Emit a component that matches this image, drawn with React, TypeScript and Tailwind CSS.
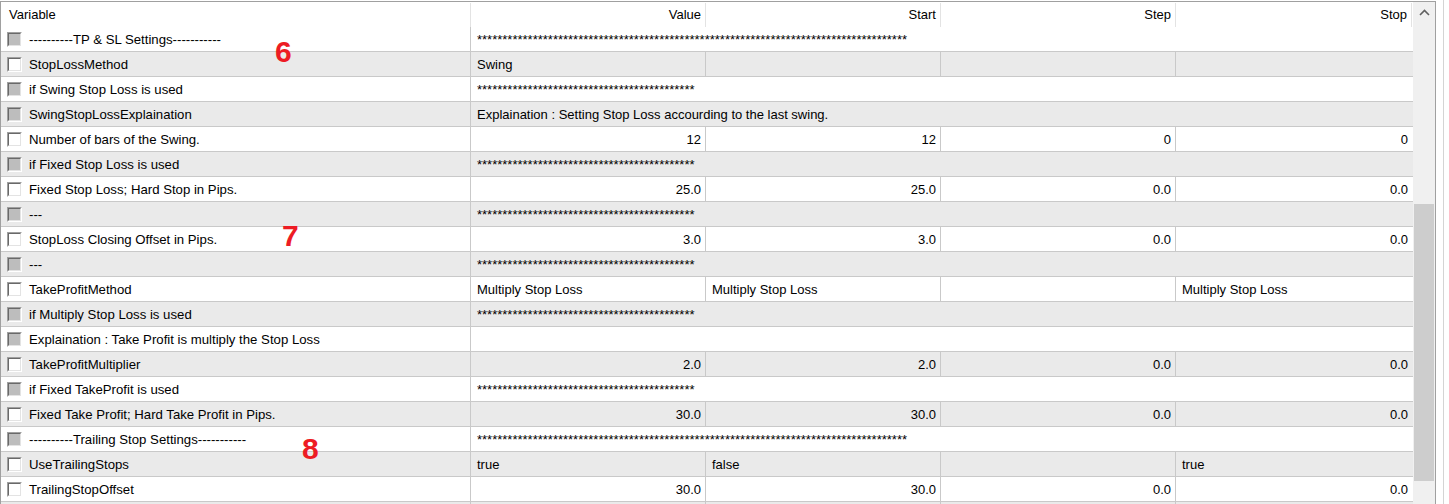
import React from "react";

type Row = {
  name: string;
  disabled: boolean;
  comment?: string;
  values?: string[];
  left?: boolean;
};

const A85 = "*".repeat(85);
const A42 = "*".repeat(43);

const ROWS: Row[] = [
  { name: "----------TP & SL Settings-----------", disabled: true, comment: A85 },
  { name: "StopLossMethod", disabled: false, values: ["Swing", "", "", ""], left: true },
  { name: "if Swing Stop Loss is used", disabled: true, comment: A42 },
  { name: "SwingStopLossExplaination", disabled: true, comment: "Explaination : Setting Stop Loss accourding to the last swing." },
  { name: "Number of bars of the Swing.", disabled: false, values: ["12", "12", "0", "0"] },
  { name: "if Fixed Stop Loss is used", disabled: true, comment: A42 },
  { name: "Fixed Stop Loss; Hard Stop in Pips.", disabled: false, values: ["25.0", "25.0", "0.0", "0.0"] },
  { name: "---", disabled: true, comment: A42 },
  { name: "StopLoss Closing Offset in Pips.", disabled: false, values: ["3.0", "3.0", "0.0", "0.0"] },
  { name: "---", disabled: true, comment: A42 },
  { name: "TakeProfitMethod", disabled: false, values: ["Multiply Stop Loss", "Multiply Stop Loss", "", "Multiply Stop Loss"], left: true },
  { name: "if Multiply Stop Loss is used", disabled: true, comment: A42 },
  { name: "Explaination : Take Profit is multiply the Stop Loss", disabled: true, comment: "" },
  { name: "TakeProfitMultiplier", disabled: false, values: ["2.0", "2.0", "0.0", "0.0"] },
  { name: "if Fixed TakeProfit is used", disabled: true, comment: A42 },
  { name: "Fixed Take Profit; Hard Take Profit in Pips.", disabled: false, values: ["30.0", "30.0", "0.0", "0.0"] },
  { name: "----------Trailing Stop Settings-----------", disabled: true, comment: A85 },
  { name: "UseTrailingStops", disabled: false, values: ["true", "false", "", "true"], left: true },
  { name: "TrailingStopOffset", disabled: false, values: ["30.0", "30.0", "0.0", "0.0"] },
  { name: "", disabled: false, values: ["", "", "", ""] },
];

function Checkbox({ disabled }: { disabled: boolean }) {
  return (
    <div className="flex h-[15px] w-[15px] shrink-0 border border-t-[#a0a0a0] border-l-[#a0a0a0] border-b-white border-r-white">
      <div
        className={`flex-1 border border-t-[#696969] border-l-[#696969] border-b-[#e3e3e3] border-r-[#e3e3e3] ${
          disabled ? "bg-[#bdbdbd]" : "bg-white"
        }`}
      />
    </div>
  );
}

function HeaderCell({ label, width, left }: { label: string; width: string; left?: boolean }) {
  return (
    <div className="flex shrink-0">
      <div className={`${width} flex items-center pt-[1px] ${left ? "justify-start pl-[8px]" : "justify-end pr-[4px]"}`}>
        {label}
      </div>
      <div className="mt-[1px] w-px self-stretch bg-[#e3e3e3]" />
    </div>
  );
}

function DataRow({ row, gray }: { row: Row; gray: boolean }) {
  return (
    <div className={`flex h-[25px] shrink-0 border-b border-[#c9c9c9] ${gray ? "bg-[#eaeaea]" : "bg-white"}`}>
      <div className="flex w-[470px] shrink-0 items-center border-r border-[#c9c9c9] pl-[6px]">
        {row.name !== "" && <Checkbox disabled={row.disabled} />}
        <span className="ml-[7px] whitespace-nowrap pt-[2px] text-[13.2px]">{row.name}</span>
      </div>
      {row.comment !== undefined ? (
        <div className="flex flex-1 items-center overflow-hidden whitespace-nowrap pl-[6px] pt-[2px]">{row.comment}</div>
      ) : (
        row.values!.map((v, i) => (
          <div
            key={i}
            className={`flex shrink-0 items-center whitespace-nowrap pt-[2px] ${
              i < 3 ? "w-[235px] border-r border-[#c9c9c9]" : "w-[236px]"
            } ${row.left ? "justify-start pl-[6px]" : "justify-end pr-[4px]"}`}
          >
            {v}
          </div>
        ))
      )}
    </div>
  );
}

export default function App() {
  return (
    <div
      className="relative flex h-[504px] w-[1449px] overflow-hidden bg-white text-[13px] text-black"
      style={{ fontFamily: '"Liberation Sans", Arial, sans-serif' }}
    >
      <div className="mt-[1px] flex h-[530px] w-[1436px] shrink-0 border-l border-r border-t border-[#a0a0a0]">
        <div className="flex w-[1412px] shrink-0 flex-col overflow-hidden">
          <div className="flex h-[25px] shrink-0 bg-white">
            <HeaderCell label="Variable" width="w-[469px]" left />
            <HeaderCell label="Value" width="w-[234px]" />
            <HeaderCell label="Start" width="w-[234px]" />
            <HeaderCell label="Step" width="w-[234px]" />
            <HeaderCell label="Stop" width="w-[235px]" />
          </div>
          {ROWS.map((r, i) => (
            <DataRow key={i} row={r} gray={i % 2 === 1} />
          ))}
        </div>
        <div className="flex w-[22px] shrink-0 flex-col bg-[#f0f0f0]">
          <div className="flex h-[20px] items-center justify-center">
            <svg width="11" height="7" viewBox="0 0 11 7">
              <path d="M1 6 L5.5 1.5 L10 6" fill="none" stroke="#606060" strokeWidth="1.6" />
            </svg>
          </div>
          <div className="h-[182px]" />
          <div className="mx-[1px] h-[277px] bg-[#cdcdcd]" />
        </div>
      </div>
      <div className="ml-[7px] w-px self-stretch bg-[#d4d4d4]" />

      <div className="absolute left-[275px] top-[37px] text-[30px] font-bold leading-[30px] text-[#ed1c24]">6</div>
      <div className="absolute left-[282px] top-[221px] text-[30px] font-bold leading-[30px] text-[#ed1c24]">7</div>
      <div className="absolute left-[302px] top-[434px] text-[30px] font-bold leading-[30px] text-[#ed1c24]">8</div>
    </div>
  );
}
